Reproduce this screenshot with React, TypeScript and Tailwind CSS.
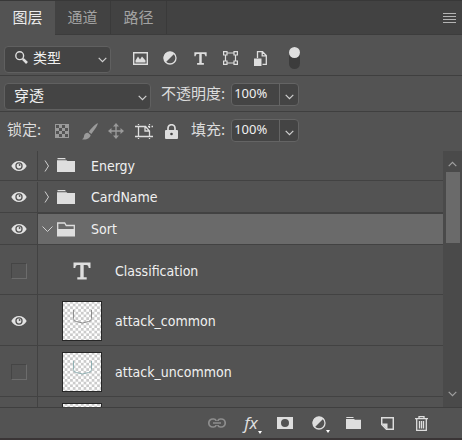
import { useState, type ReactNode } from "react";

const cjk = "font-['Noto_Sans_CJK_SC',sans-serif]";

function Chevron({ className = "" }: { className?: string }) {
  return (
    <svg className={className} width="9" height="6" viewBox="0 0 9 6" fill="none" stroke="currentColor" strokeWidth="1.2" aria-hidden="true">
      <path d="M0.7 0.8 4.5 4.6 8.3 0.8" />
    </svg>
  );
}

function Eye() {
  return (
    <svg width="16" height="12" viewBox="0 0 16 12" aria-hidden="true">
      <path fill="#e2e2e2" fillRule="evenodd" d="M0.3 6C2.2 2.6 4.8 1 8 1s5.800 1.600 7.700 5C13.800 9.400 11.200 11 8 11S2.200 9.400.3 6ZM8 2.300a3.700 3.700 0 1 0 0 7.400 3.700 3.700 0 0 0 0-7.400Z" />
      <circle cx="8" cy="6" r="2.400" fill="#e2e2e2" />
      <circle cx="8.600" cy="5" r="0.900" fill="#535353" />
    </svg>
  );
}

function Folder({ open = false }: { open?: boolean }) {
  return (
    <svg width="18" height="15" viewBox="0 0 18 15" aria-hidden="true">
      {open ? (
        <>
          <path fill="none" stroke="#dedede" strokeWidth="1.300" d="M0.700 8V1h7l1.500 2.500h8.100V8" />
          <path fill="#dedede" d="M0 7h18v7.500H0z" />
        </>
      ) : (
        <path fill="#dedede" d="M0.500 0h7.500l1 1.200H0.500zM0 2.200h9.500l1 .8H18v11H0z" />
      )}
    </svg>
  );
}

function TypeIcon({ size }: { size: number }) {
  return (
    <svg width={size} height={size} viewBox="0 0 18 18" aria-hidden="true">
      <path fill="#dedede" d="M0.500 0.500h17V6h-1.800C15.500 4 14.900 2.900 13.400 2.900h-2.700v12.400h3v2.200H4.300v-2.200h3V2.900H4.600C3.100 2.900 2.500 4 2.300 6H0.500z" />
    </svg>
  );
}

function HalfCircle() {
  return (
    <svg width="14" height="14" viewBox="0 0 14 14" aria-hidden="true">
      <circle cx="7" cy="7" r="6" fill="none" stroke="#dedede" strokeWidth="1.300" />
      <path fill="#dedede" d="M11.500 2.500A6.300 6.300 0 0 0 2.500 11.500Z" />
    </svg>
  );
}

function Thumb({ stroke }: { stroke: string }) {
  return (
    <svg width="40" height="40" viewBox="0 0 40 40" aria-hidden="true">
      <defs>
        <pattern id="checker" width="5.4" height="5.4" patternUnits="userSpaceOnUse">
          <rect width="5.4" height="5.4" fill="#fff" />
          <path fill="#cbcbcb" d="M2.700 0h2.700v2.700H2.700zM0 2.700h2.700v2.700H0z" />
        </pattern>
      </defs>
      <rect width="40" height="40" fill="#262626" />
      <rect x="1" y="1" width="38" height="38" fill="url(#checker)" />
      <path fill="none" stroke={stroke} d="M11.500 9v8.500q0 3 3 3l6 1.500 6-1.500q3 0 3-3V9" />
    </svg>
  );
}

function IconButton({ label, width, children }: { label: string; width: string; children: ReactNode }) {
  return (
    <button type="button" aria-label={label} className={`flex h-6 shrink-0 items-center justify-center ${width}`}>
      {children}
    </button>
  );
}

function Percent({ id, label }: { id: string; label: string }) {
  return (
    <div className="flex">
      <label htmlFor={id} className={`mr-[6px] text-[15px] leading-5 text-[#dcdcdc] ${cjk}`}>
        {label}
      </label>
      <div className="flex h-[23px] w-[68px] rounded-sm border border-[#646464] bg-[#444]">
        <input id={id} defaultValue="100%" className="w-0 flex-1 bg-transparent pb-px pl-0.5 text-[13px] text-[#f0f0f0] outline-none" />
        <button type="button" aria-label={`${label} 选项`} className="flex w-[19px] items-center justify-center border-l border-[#646464] pt-1 text-[#d0d0d0]">
          <Chevron />
        </button>
      </div>
    </div>
  );
}

type Layer = {
  name: string;
  kind: "group" | "open" | "text" | "image";
  visible: boolean;
  height: string;
  stroke?: string;
};

const layers: Layer[] = [
  { name: "Energy", kind: "group", visible: true, height: "h-[30px]" },
  { name: "CardName", kind: "group", visible: true, height: "h-[32px] pt-px" },
  { name: "Sort", kind: "open", visible: true, height: "h-[32px]" },
  { name: "Classification", kind: "text", visible: false, height: "h-[50px]" },
  { name: "attack_common", kind: "image", visible: true, height: "h-[51px]", stroke: "#8d8d8d" },
  { name: "attack_uncommon", kind: "image", visible: false, height: "h-[51px]", stroke: "#8fb0b3" },
  { name: "", kind: "image", visible: false, height: "h-[51px]", stroke: "#8d8d8d" },
];

function LayerRow({ layer }: { layer: Layer }) {
  const [visible, setVisible] = useState(layer.visible);
  const group = layer.kind === "group" || layer.kind === "open";
  const open = layer.kind === "open";
  return (
    <li className={`flex shrink-0 ${layer.height}`}>
      <button
        type="button"
        aria-label="指示图层可见性"
        aria-pressed={visible}
        onClick={() => setVisible(!visible)}
        className={`flex w-[38px] shrink-0 items-center justify-center border-r border-b border-[#424242] ${group ? "" : "pt-0.5"}`}
      >
        {visible ? <Eye /> : <span className="size-4 border border-t-[#454545] border-r-[#6c6c6c] border-b-[#6c6c6c] border-l-[#454545]" />}
      </button>
      <div className={`flex min-w-0 flex-1 items-center border-b border-[#424242] ${open ? "border-t border-t-[#424242] bg-[#6a6a6a]" : ""} ${group ? "" : "pt-0.5"}`}>
        {group ? (
          <>
            <button type="button" aria-label={open ? "折叠" : "展开"} className="flex w-[19px] items-center justify-center text-[#cfcfcf]">
              <svg width="11" height="12" viewBox="0 0 11 12" fill="none" stroke="currentColor" aria-hidden="true">
                <path d={open ? "M0.500 3.500 5.500 8.500 10.500 3.500" : "M3 0.500 6.500 6 3 11.500"} />
              </svg>
            </button>
            <Folder open={open} />
          </>
        ) : (
          <span className="ml-6 flex w-10 justify-center">
            {layer.kind === "text" ? <TypeIcon size={18} /> : <Thumb stroke={layer.stroke ?? "#8d8d8d"} />}
          </span>
        )}
        <span className={`font-['DejaVu_Sans_Condensed','Noto_Sans',sans-serif] text-sm text-[#f0f0f0] ${group ? "ml-4" : "ml-[13px]"}`}>{layer.name}</span>
      </div>
    </li>
  );
}

export default function App() {
  return (
    <main className="flex h-screen min-h-80 flex-col overflow-hidden border-b-2 border-[#3a3536] bg-[#535353] font-['Noto_Sans',sans-serif]">
      <header className="flex h-[35px] shrink-0 border-t border-b border-t-[#383838] border-b-[#3c3c3c] bg-[#424242]">
        <div role="tablist" className={`flex text-[15px] ${cjk}`}>
          <button type="button" role="tab" aria-selected="true" className="-mb-px w-[55px] bg-[#535353] pb-0.5 text-[#ececec]">图层</button>
          <button type="button" role="tab" aria-selected="false" className="w-14 border-r border-[#3a3a3a] text-[#a2a2a2]">通道</button>
          <button type="button" role="tab" aria-selected="false" className="w-14 border-r border-[#3a3a3a] text-[#a2a2a2]">路径</button>
        </div>
        <button type="button" aria-label="面板菜单" className="ml-auto flex w-[26px] items-center justify-center">
          <svg width="13" height="10" viewBox="0 0 13 10" shapeRendering="crispEdges" aria-hidden="true">
            <path fill="#b4b4b4" d="M0 0h13v1H0zM0 3h13v1H0zM0 6h13v1H0zM0 9h13v1H0z" />
          </svg>
        </button>
      </header>

      <section className="flex h-[41px] shrink-0 items-center border-b border-[#3f3f3f] pt-[6px] pl-1">
        <div className="relative h-[27px] w-[107px]">
          <select aria-label="筛选类型" className={`size-full appearance-none rounded-sm border border-[#606060] bg-[#444] pb-[5px] pl-7 text-sm text-[#f0f0f0] ${cjk}`}>
            <option>类型</option>
          </select>
          <svg className="pointer-events-none absolute top-[6px] left-[11px]" width="13" height="13" viewBox="0 0 13 13" fill="none" stroke="#dedede" aria-hidden="true">
            <circle cx="4.700" cy="4.700" r="3.900" strokeWidth="1.400" />
            <path strokeWidth="2.600" d="m7.800 7.800 4.200 4.200" />
          </svg>
          <Chevron className="pointer-events-none absolute top-3 right-1 text-[#d0d0d0]" />
        </div>
        <div className="ml-[14px] flex">
          <IconButton label="像素图层" width="w-[30px]">
            <svg width="15" height="13" viewBox="0 0 15 13" aria-hidden="true">
              <path fill="none" stroke="#dedede" strokeWidth="1.400" d="M0.700 0.700h13.600v11.600H0.700z" />
              <path fill="#dedede" d="M2.500 10.500V8.500l2.500-4 2 3 1-1.500 1-1.500 3.500 4v2z" />
            </svg>
          </IconButton>
          <IconButton label="调整图层" width="w-[30px]"><HalfCircle /></IconButton>
          <IconButton label="文字图层" width="w-[30px]"><TypeIcon size={13} /></IconButton>
          <IconButton label="形状图层" width="w-[30px]">
            <svg width="15" height="14" viewBox="0 0 15 14" fill="none" stroke="#dedede" strokeWidth="1.200" aria-hidden="true">
              <path d="M4 2h7M4 12h7M2.500 4v6M12.500 4v6M0.600 0.600h3.400v3.400H0.600zM11 0.600h3.400v3.400H11zM0.600 10h3.400v3.400H0.600zM11 10h3.400v3.400H11z" />
            </svg>
          </IconButton>
          <IconButton label="智能对象" width="w-[30px]">
            <svg width="13" height="15" viewBox="0 0 13 15" aria-hidden="true">
              <path fill="none" stroke="#dedede" strokeWidth="1.300" d="M3.500 7V0.700h5L12.300 4.500v8.800H8.500M8.200 0.700v4.100h4" />
              <path fill="#dedede" d="M0 7.500h7.500V15H0z" />
            </svg>
          </IconButton>
        </div>
        <button type="button" role="switch" aria-checked="true" aria-label="打开图层过滤" className="ml-[14px] flex h-[22px] w-[11px] items-start rounded-full bg-[#3c3c3c]">
          <span className="block size-[11px] rounded-full bg-[#dedede]" />
        </button>
      </section>

      <section className="flex h-[36px] shrink-0 border-b border-[#3f3f3f] pt-[7px] pl-1">
        <div className="relative h-[27px] w-[147px]">
          <select aria-label="混合模式" className={`size-full appearance-none rounded-sm border border-[#606060] bg-[#444] pb-1 pl-[9px] text-[15px] text-[#f0f0f0] ${cjk}`}>
            <option>穿透</option>
          </select>
          <Chevron className="pointer-events-none absolute top-3 right-1 text-[#d0d0d0]" />
        </div>
        <div className="ml-[10px]"><Percent id="opacity" label="不透明度:" /></div>
      </section>

      <section className="flex h-[39px] shrink-0 pt-[7px] pl-[7px]">
        <span className={`w-[41px] shrink-0 text-[15px] leading-5 text-[#dcdcdc] ${cjk}`}>锁定:</span>
        <IconButton label="锁定透明像素" width="w-7">
          <svg width="14" height="14" viewBox="0 0 14 14" shapeRendering="crispEdges" aria-hidden="true">
            <path fill="#9a9a9a" fillRule="evenodd" d="M0 0h14v14H0zM1 1v3h3V1zM7 1v3h3V1zM4 4v3h3V4zM10 4v3h3V4zM1 7v3h3V7zM7 7v3h3V7zM4 10v3h3v-3zM10 10v3h3v-3z" />
          </svg>
        </IconButton>
        <IconButton label="锁定图像像素" width="w-7">
          <svg width="16" height="17" viewBox="0 0 16 17" fill="#9a9a9a" aria-hidden="true">
            <path d="M15.800 0.300C16.300 1.500 11.500 8.500 9.300 11L6.800 9C8.500 6 14 0.300 15.800 0.300ZM6 9.800l2.600 2.200C8.500 15 4 17.500 0 16.300c2-.8 1.800-2.300 2.200-4C2.700 10.600 4.300 9.500 6 9.800Z" />
          </svg>
        </IconButton>
        <IconButton label="锁定位置" width="w-6">
          <svg width="16" height="16" viewBox="0 0 16 16" fill="#9a9a9a" aria-hidden="true">
            <path d="M8 0l3 3.500H8.700v3.800h3.800V5L16 8l-3.500 3V8.700H8.700v3.800H11L8 16l-3-3.500h2.300V8.700H3.500V11L0 8l3.500-3v2.300h3.800V3.500H5z" />
          </svg>
        </IconButton>
        <IconButton label="防止自动嵌套" width="w-8">
          <svg width="18" height="15" viewBox="0 0 18 15" fill="none" stroke="#dedede" strokeWidth="1.300" aria-hidden="true">
            <path d="M3.500 2.500v10h11V7L10.500 2.500zM10 2.500V7h4.500M0 2.500h3M0 12.500h3M15 12.500h3M3.500 0v1M14.500 0v1M3.500 15v-1M14.500 15v-1M13 2.500h1.500V4M16.500 2.500H18" />
          </svg>
        </IconButton>
        <IconButton label="锁定全部" width="w-[23px]">
          <svg width="13" height="15" viewBox="0 0 13 15" aria-hidden="true">
            <path fill="none" stroke="#dedede" strokeWidth="1.700" d="M3 7V4.200a3.500 3.500 0 0 1 7 0V7" />
            <rect y="6" width="13" height="9" rx="1" fill="#dedede" />
            <circle cx="6.500" cy="10" r="1.300" fill="#444" />
          </svg>
        </IconButton>
        <div className="ml-[8px]"><Percent id="fill" label="填充:" /></div>
      </section>

      <section className="flex min-h-0 flex-1">
        <ul className="flex min-w-0 flex-1 flex-col overflow-hidden">
          {layers.map((layer, i) => <LayerRow key={i} layer={layer} />)}
        </ul>
        <div className="flex w-[19px] shrink-0 flex-col items-center bg-[#4a4a4a] text-[#a0a0a0]">
          <button type="button" aria-label="向上滚动" className="flex h-[21px] w-full items-center justify-center pt-1"><Chevron className="rotate-180" /></button>
          <div className="h-[71px] w-[14px] bg-[#6a6a6a]" />
          <button type="button" aria-label="向下滚动" className="mt-auto flex h-[26px] w-full items-center justify-center"><Chevron /></button>
        </div>
      </section>

      <footer className="flex h-[31px] shrink-0 items-center justify-end border-t border-[#3f3f3f] pr-6">
        <IconButton label="链接图层" width="w-[34px]">
          <svg width="18" height="10" viewBox="0 0 18 10" fill="none" stroke="#8e8e8e" strokeWidth="1.700" aria-hidden="true">
            <path d="M8 3V2.500Q7.500 1 5.500 1H4.800a4 4 0 0 0 0 8h.7Q7.500 9 8 7.500V7M10 3V2.500Q10.500 1 12.500 1h.7a4 4 0 0 1 0 8h-.7Q10.500 9 10 7.500V7M5 5h8" />
          </svg>
        </IconButton>
        <button type="button" aria-label="添加图层样式" className="flex h-6 w-[34px] items-center justify-center pb-0.5 pl-1 text-[17px] leading-none text-[#dedede] italic">
          fx
          <svg className="mt-5" width="4" height="3" viewBox="0 0 4 3" aria-hidden="true"><path fill="#fff" d="M0 0h4L2 3z" /></svg>
        </button>
        <IconButton label="添加图层蒙版" width="w-[34px]">
          <svg width="16" height="12" viewBox="0 0 16 12" aria-hidden="true"><path fill="#dedede" fillRule="evenodd" d="M0 0h16v12H0zM8 2a4 4 0 1 0 0 8 4 4 0 0 0 0-8Z" /></svg>
        </IconButton>
        <IconButton label="创建调整图层" width="w-[34px]">
          <span className="ml-1"><HalfCircle /></span>
          <svg className="mt-4" width="4" height="3" viewBox="0 0 4 3" aria-hidden="true"><path fill="#fff" d="M0 0h4L2 3z" /></svg>
        </IconButton>
        <IconButton label="创建新组" width="w-[34px]">
          <svg width="15" height="12" viewBox="0 0 15 12" aria-hidden="true"><path fill="#dedede" d="M0.300 0h6.700l1 1H0.300zM0 2h8l1 .700h6V12H0z" /></svg>
        </IconButton>
        <IconButton label="创建新图层" width="w-[34px]">
          <svg width="13" height="13" viewBox="0 0 13 13" fill="none" stroke="#dedede" strokeWidth="1.500" aria-hidden="true">
            <path d="M0.700 0.700h11.600v11.600H5.500L0.700 7.500z" />
            <path fill="#dedede" stroke="none" d="M0.500 6.500H6.500V12.500z" />
          </svg>
        </IconButton>
        <IconButton label="删除图层" width="w-[34px]">
          <svg width="13" height="15" viewBox="0 0 13 15" fill="none" stroke="#dedede" strokeWidth="1.300" aria-hidden="true">
            <path d="M0 2.600h13M4 2.500V0.700h5v1.800M1.700 3v11.300h9.600V3M4.500 5v7.500M6.500 5v7.500M8.500 5v7.500" />
          </svg>
        </IconButton>
      </footer>
    </main>
  );
}
